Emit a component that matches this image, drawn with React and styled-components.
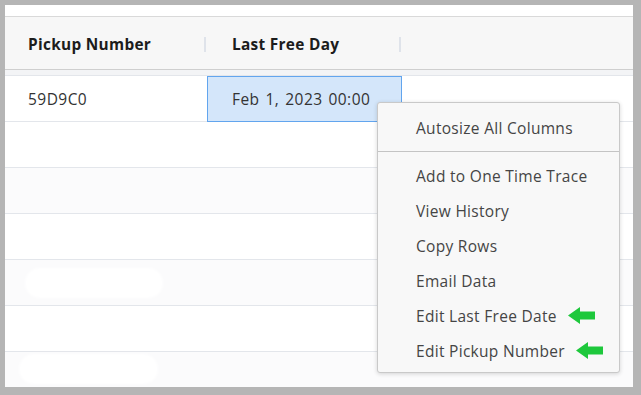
import React from "react";
import styled, { createGlobalStyle } from "styled-components";

const GlobalStyle = createGlobalStyle`
  html, body { margin: 0; padding: 0; }
  body {
    background: #b5b5b5;
    font-family: "Open Sans", "Noto Sans", sans-serif;
  }
  * { box-sizing: border-box; }
`;

const Frame = styled.div`
  width: 641px;
  height: 395px;
  padding: 5px 8px 8px 5px;
  background: #b5b5b5;
`;

const Panel = styled.div`
  position: relative;
  width: 628px;
  height: 382px;
  background: #ffffff;
  overflow: hidden;
  display: flex;
  flex-direction: column;
`;

const TopStrip = styled.div`
  height: 12px;
  flex: none;
  border-bottom: 1px solid #d9d9d9;
`;

const HeaderRow = styled.div`
  display: flex;
  height: 53px;
  flex: none;
  background: #f7f7f7;
  border-bottom: 1px solid #cfcfcf;
`;

const HeaderCell = styled.div`
  width: ${(p) => p.$w}px;
  flex: none;
  display: flex;
  align-items: center;
  justify-content: space-between;
  padding-left: ${(p) => p.$pl}px;
  padding-top: 2px;
  font-weight: 700;
  font-size: 15.4px;
  letter-spacing: 0.3px;
  color: #1c1c1c;
`;

const Resizer = styled.span`
  width: 2px;
  height: 15px;
  margin-right: 1px;
  background: #dfe3ea;
`;

const Gap = styled.div`
  height: 6px;
  flex: none;
  background: #f3f4f6;
  border-bottom: 1px solid #e3e6eb;
`;

const Row = styled.div`
  display: flex;
  height: 46px;
  flex: none;
  background: ${(p) => (p.$alt ? "#fbfbfc" : "#ffffff")};
  border-bottom: 1px solid #e3e6eb;
`;

const Cell = styled.div`
  width: ${(p) => p.$w}px;
  height: 45px;
  flex: none;
  display: flex;
  align-items: center;
  padding-left: ${(p) => p.$pl}px;
  font-size: 15.5px;
  letter-spacing: 0.45px;
  word-spacing: 1.5px;
  color: #333333;
`;

const SelectedCell = styled(Cell)`
  height: 46px;
  padding-left: ${(p) => p.$pl - 1}px;
  background: #d4e6fa;
  border: 1px solid #62a5ee;
  position: relative;
`;

const Redacted = styled.div`
  align-self: flex-start;
  margin-top: ${(p) => p.$top}px;
  margin-left: ${(p) => p.$left}px;
  width: ${(p) => p.$w}px;
  height: 30px;
  border-radius: 15px;
  background: #ffffff;
  filter: blur(1.5px);
`;

const Menu = styled.div`
  position: absolute;
  left: 372px;
  top: 97px;
  width: 243px;
  height: 271px;
  padding: 7px 0 4px;
  background: #f8f8f8;
  border: 1px solid #c9c9c9;
  border-radius: 3px;
  box-shadow: 0 1px 4px rgba(0, 0, 0, 0.16);
  display: flex;
  flex-direction: column;
`;

const MenuItem = styled.div`
  height: 35px;
  flex: none;
  display: flex;
  align-items: center;
  gap: 11px;
  padding-left: 38px;
  font-size: 15.5px;
  letter-spacing: 0.3px;
  color: #454545;
`;

const MenuSeparator = styled.div`
  height: 1px;
  flex: none;
  margin: 6px 0;
  background: #c4c4c4;
`;

const Arrow = () => (
  <svg width="27" height="17" viewBox="0 0 27 17" aria-hidden="true">
    <polygon
      points="0,8.5 12,0 12,4.5 27,4.5 27,12.5 12,12.5 12,17"
      fill="#1ec83c"
    />
  </svg>
);

const COL1 = { w: 202, pl: 23 };
const COL2 = { w: 195, pl: 25 };

const menuItems = [
  { label: "Add to One Time Trace" },
  { label: "View History" },
  { label: "Copy Rows" },
  { label: "Email Data" },
  { label: "Edit Last Free Date", arrow: true },
  { label: "Edit Pickup Number", arrow: true },
];

export default function App() {
  return (
    <>
      <GlobalStyle />
      <Frame>
        <Panel>
          <TopStrip />
          <HeaderRow>
            <HeaderCell $w={COL1.w} $pl={COL1.pl}>
              Pickup Number
              <Resizer />
            </HeaderCell>
            <HeaderCell $w={COL2.w} $pl={COL2.pl}>
              Last Free Day
              <Resizer />
            </HeaderCell>
          </HeaderRow>
          <Gap />
          <Row>
            <Cell $w={COL1.w} $pl={COL1.pl}>59D9C0</Cell>
            <SelectedCell $w={COL2.w} $pl={COL2.pl}>
              Feb 1, 2023 00:00
            </SelectedCell>
          </Row>
          <Row />
          <Row $alt />
          <Row />
          <Row $alt>
            <Redacted $top={8} $left={20} $w={138} />
          </Row>
          <Row />
          <Row $alt>
            <Redacted $top={2} $left={14} $w={139} />
          </Row>
          <Menu>
            <MenuItem>Autosize All Columns</MenuItem>
            <MenuSeparator />
            {menuItems.map((item) => (
              <MenuItem key={item.label}>
                {item.label}
                {item.arrow && <Arrow />}
              </MenuItem>
            ))}
          </Menu>
        </Panel>
      </Frame>
    </>
  );
}
